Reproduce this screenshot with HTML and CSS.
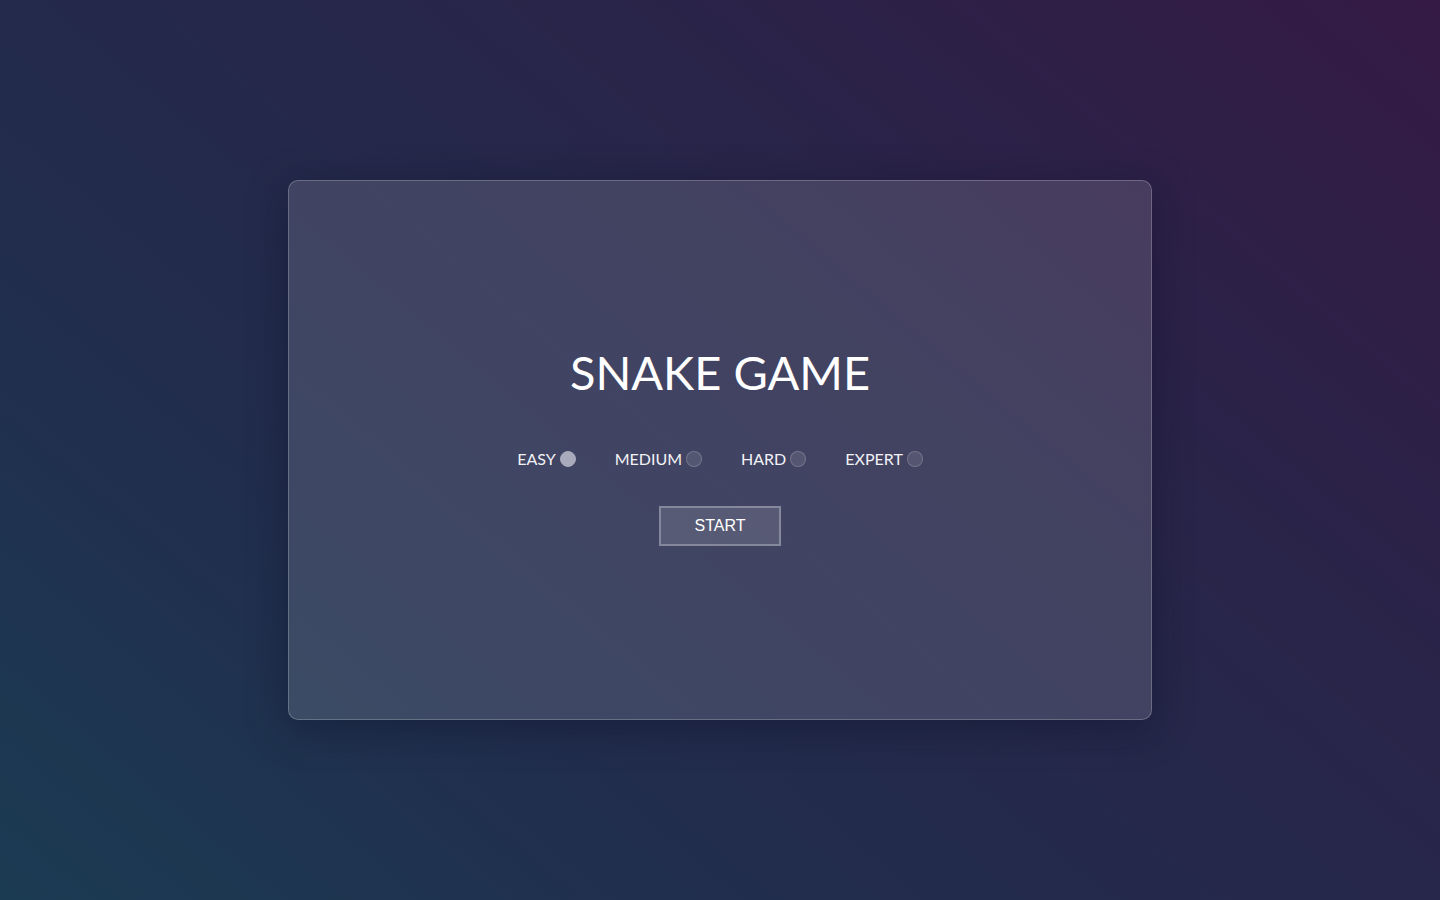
FILE: index.html
```html
<!DOCTYPE html>
<html lang="en">
<head>
<meta charset="utf-8">
<title>Snake Game</title>
<link rel="stylesheet" href="styles.css">
</head>
<body>
<main class="stage">
  <section class="card">
    <h1 class="title">SNAKE GAME</h1>
    <div class="levels">
      <label class="level">EASY <span class="radio radio-on"></span></label>
      <label class="level">MEDIUM <span class="radio"></span></label>
      <label class="level">HARD <span class="radio"></span></label>
      <label class="level">EXPERT <span class="radio"></span></label>
    </div>
    <button class="start">START</button>
  </section>
</main>
</body>
</html>
```
FILE: styles.css
```css
html, body {
  margin: 0;
  height: 100%;
}
body {
  background: linear-gradient(40deg, #1b3b53 0%, #212d4d 30%, #27264a 60%, #341a45 100%);
  font-family: Lato, "Open Sans", sans-serif;
  color: #fff;
}
.stage {
  height: 900px;
  display: flex;
  align-items: center;
  justify-content: center;
}
.card {
  width: 864px;
  height: 540px;
  box-sizing: border-box;
  border: 1px solid rgba(255, 255, 255, 0.22);
  border-radius: 10px;
  background: rgba(255, 255, 255, 0.13);
  box-shadow: 0 8px 40px rgba(10, 15, 35, 0.4);
  display: flex;
  flex-direction: column;
  align-items: center;
  padding-top: 161px;
}
.title {
  margin: 0;
  font-weight: 400;
  font-size: 47px;
  line-height: 60px;
}
.levels {
  display: flex;
  gap: 39px;
  margin-top: 47px;
}
.level {
  display: flex;
  align-items: center;
  gap: 4px;
  font-size: 16px;
  line-height: 20px;
  color: #f2f2f6;
}
.radio {
  width: 14px;
  height: 14px;
  border-radius: 50%;
  border: 1px solid rgba(255, 255, 255, 0.18);
  background: rgba(255, 255, 255, 0.1);
}
.radio-on {
  background: #a9abbd;
  border-color: #a9abbd;
}
.start {
  margin-top: 37px;
  width: 122px;
  height: 40px;
  border: 2px solid rgba(255, 255, 255, 0.28);
  background: rgba(255, 255, 255, 0.12);
  color: #fff;
  font-family: "Liberation Sans", Arial, sans-serif;
  font-size: 16px;
  padding: 0;
}
```
